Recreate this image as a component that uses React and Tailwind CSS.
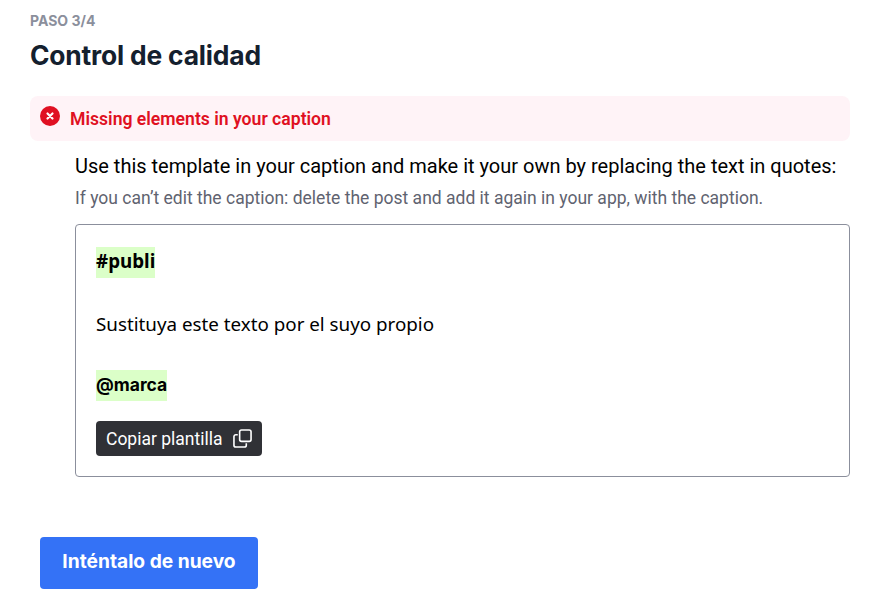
import React from 'react';

const CopyIcon = () => (
  <svg width="19" height="19" viewBox="0 0 20 20" fill="none" stroke="white" strokeWidth="1.7" className="ml-[10px]">
    <rect x="7" y="1" width="12" height="12" rx="2" />
    <path d="M5 6H3a2 2 0 0 0-2 2v9a2 2 0 0 0 2 2h9a2 2 0 0 0 2-2v-2" />
  </svg>
);

const ErrorIcon = () => (
  <svg width="20" height="20" viewBox="0 0 20 20" className="shrink-0">
    <circle cx="10" cy="10" r="10" fill="#e01022" />
    <path d="M7.5 7.5l5 5M12.5 7.5l-5 5" stroke="white" strokeWidth="2.2" strokeLinecap="round" />
  </svg>
);

export default function App() {
  return (
    <div className="w-[877px] h-[607px] bg-white px-[30px] pt-[12px] overflow-hidden font-['Roboto',sans-serif]">
      {/* Header */}
      <div className="font-['Inter',sans-serif] text-sm leading-[18px] font-bold text-[#8b8f9c]">PASO 3/4</div>
      <h1 className="mt-[7px] font-['Inter',sans-serif] text-[26.4px] leading-[36px] font-bold tracking-[-0.18px] text-[#14202e]">Control de calidad</h1>

      {/* Alert */}
      <div className="mt-[23px] w-[820px] h-[45px] bg-[#fff3f7] rounded-lg flex items-center pl-[10px] gap-[10px]">
        <div className="-mt-[5px]"><ErrorIcon /></div>
        <span className="mt-[1px] text-[17.6px] font-semibold text-[#e01022]">Missing elements in your caption</span>
      </div>

      {/* Template */}
      <div className="ml-[45px] w-[775px]">
        <p className="mt-[11px] text-xl leading-[28px] text-black">Use this template in your caption and make it your own by replacing the text in quotes:</p>
        <p className="mt-[5px] text-[17.5px] leading-[26px] text-[#5f6370]">If you can’t edit the caption: delete the post and add it again in your app, with the caption.</p>

        <div className="mt-[13px] h-[253px] border border-[#8b8f9c] rounded-[4px] pl-[20px] pt-[22px]">
          <div className="h-[31px] flex items-center">
            <span className="bg-[#dbffc8] h-[31px] leading-[29px] text-[18.8px] font-bold text-black font-['Noto_Sans',sans-serif]">#publi</span>
          </div>
          <div className="mt-[31px] h-[31px] leading-[31px] text-[18.8px] text-black font-['Noto_Sans',sans-serif]">Sustituya este texto por el suyo propio</div>
          <div className="mt-[30px] h-[31px] flex items-center">
            <span className="bg-[#dbffc8] h-[31px] leading-[29px] text-[17.5px] font-bold text-black font-['Inter',sans-serif]">@marca</span>
          </div>
          <button className="mt-[20px] h-[35px] w-[166px] bg-[#303136] rounded-[4px] flex items-center pl-[10px] text-white text-[17.5px]">
            <span className="mt-[1px]">Copiar plantilla</span>
            <CopyIcon />
          </button>
        </div>
      </div>

      {/* Retry */}
      <button className="mt-[60px] ml-[10px] w-[218px] h-[52px] pb-[3px] bg-[#3472f6] rounded-[4px] text-white text-[19.2px] font-bold font-['Inter',sans-serif]">Inténtalo de nuevo</button>
    </div>
  );
}
